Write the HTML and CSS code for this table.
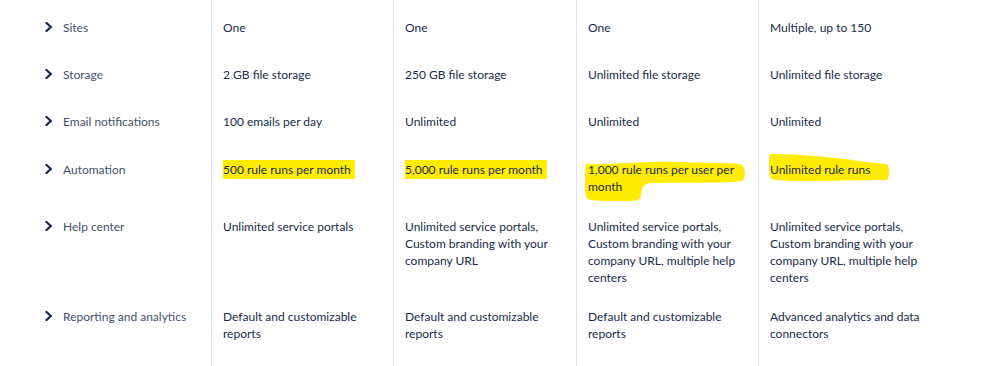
FILE: index.html
```html
<!DOCTYPE html>
<html>
<head>
<meta charset="utf-8">
<link rel="stylesheet" href="styles.css">
</head>
<body>
<div class="table">
  <div class="label first"><svg class="chev" viewBox="0 0 8 10"><path d="M1.5 1 L5.8 5 L1.5 9"/></svg><span>Sites</span></div>
  <div class="cell first">One</div>
  <div class="cell first">One</div>
  <div class="cell first">One</div>
  <div class="cell first">Multiple, up to 150</div>

  <div class="label"><svg class="chev" viewBox="0 0 8 10"><path d="M1.5 1 L5.8 5 L1.5 9"/></svg><span>Storage</span></div>
  <div class="cell">2 GB file storage</div>
  <div class="cell">250 GB file storage</div>
  <div class="cell">Unlimited file storage</div>
  <div class="cell">Unlimited file storage</div>

  <div class="label tall"><svg class="chev" viewBox="0 0 8 10"><path d="M1.5 1 L5.8 5 L1.5 9"/></svg><span>Email notifications</span></div>
  <div class="cell tall">100 emails per day</div>
  <div class="cell tall">Unlimited</div>
  <div class="cell tall">Unlimited</div>
  <div class="cell tall">Unlimited</div>

  <div class="label"><svg class="chev" viewBox="0 0 8 10"><path d="M1.5 1 L5.8 5 L1.5 9"/></svg><span>Automation</span></div>
  <div class="cell"><span class="hl">500 rule runs per month</span></div>
  <div class="cell"><span class="hl">5,000 rule runs per month</span></div>
  <div class="cell"><div class="marked"><svg class="mark" viewBox="-10 -10 200 60" width="200" height="60"><path d="M-2 3 C20 4 60 0 92 1 C120 2 145 2 152 3 C158 5 158 15 155 19 C150 23 100 21 62 22 C54 23 53 30 53 35 C52 39 48 40 40 40 C25 40 10 40 2 39 C-3 37 -3 30 -3 24 C-3 15 -3 8 -2 3 Z"/></svg><span class="mtext">1,000 rule runs per user per month</span></div></div>
  <div class="cell"><div class="marked"><svg class="mark" viewBox="-10 -10 200 60" width="200" height="60"><path d="M0 -7 C25 -7 50 -5 75 -2 C95 1 108 2 116 3 C120 5 120 14 117 19 C100 19 60 20 30 20 C15 20 5 19 1 18 C-1 14 -1 8 -1 4 C-1 -1 -1 -5 0 -7 Z"/></svg><span class="mtext">Unlimited rule runs</span></div></div>

  <div class="label short"><svg class="chev" viewBox="0 0 8 10"><path d="M1.5 1 L5.8 5 L1.5 9"/></svg><span>Help center</span></div>
  <div class="cell short">Unlimited service portals</div>
  <div class="cell short">Unlimited service portals, Custom branding with your company URL</div>
  <div class="cell short">Unlimited service portals, Custom branding with your company URL, multiple help centers</div>
  <div class="cell short">Unlimited service portals, Custom branding with your company URL, multiple help centers</div>

  <div class="label last"><svg class="chev" viewBox="0 0 8 10"><path d="M1.5 1 L5.8 5 L1.5 9"/></svg><span>Reporting and analytics</span></div>
  <div class="cell last">Default and customizable reports</div>
  <div class="cell last">Default and customizable reports</div>
  <div class="cell last">Default and customizable reports</div>
  <div class="cell last">Advanced analytics and data connectors</div>
</div>
</body>
</html>
```
FILE: styles.css
```css
* { box-sizing: border-box; }
html, body { margin: 0; padding: 0; background: #fff; }
body {
  font-family: Lato, "Noto Sans", sans-serif;
  font-size: 12px;
  line-height: 17px;
  color: #172b4d;
  overflow: hidden;
  height: 366px;
}
.table {
  display: grid;
  grid-template-columns: 211px 182px 183px 182px 182px;
}
.label, .cell {
  padding: 11.5px 0 11.5px;
  min-height: 47px;
}
.first { padding-top: 18.5px; min-height: 54px; }
.tall { min-height: 48px; }
.short { padding-bottom: 10.5px; }
.last { padding-bottom: 60px; }
.label {
  display: flex;
  align-items: flex-start;
  padding-left: 45px;
  color: #42526e;
}
.label span { margin-left: 10px; }
.chev {
  width: 8px;
  height: 10px;
  margin-top: 3.5px;
  flex: none;
}
.chev path {
  fill: none;
  stroke: #172b4d;
  stroke-width: 2.2;
  stroke-linecap: square;
}
.cell {
  border-left: 1px solid #dfe1e6;
  padding-left: 11px;
  padding-right: 20px;
}
.hl {
  background: #ffec00;
  padding: 2px 4px 2px 0;
}
.marked {
  position: relative;
}
.mark {
  position: absolute;
  left: -10px;
  top: -10px;
  overflow: visible;
}
.mark path { fill: #ffec00; }
.mtext { position: relative; }
```
